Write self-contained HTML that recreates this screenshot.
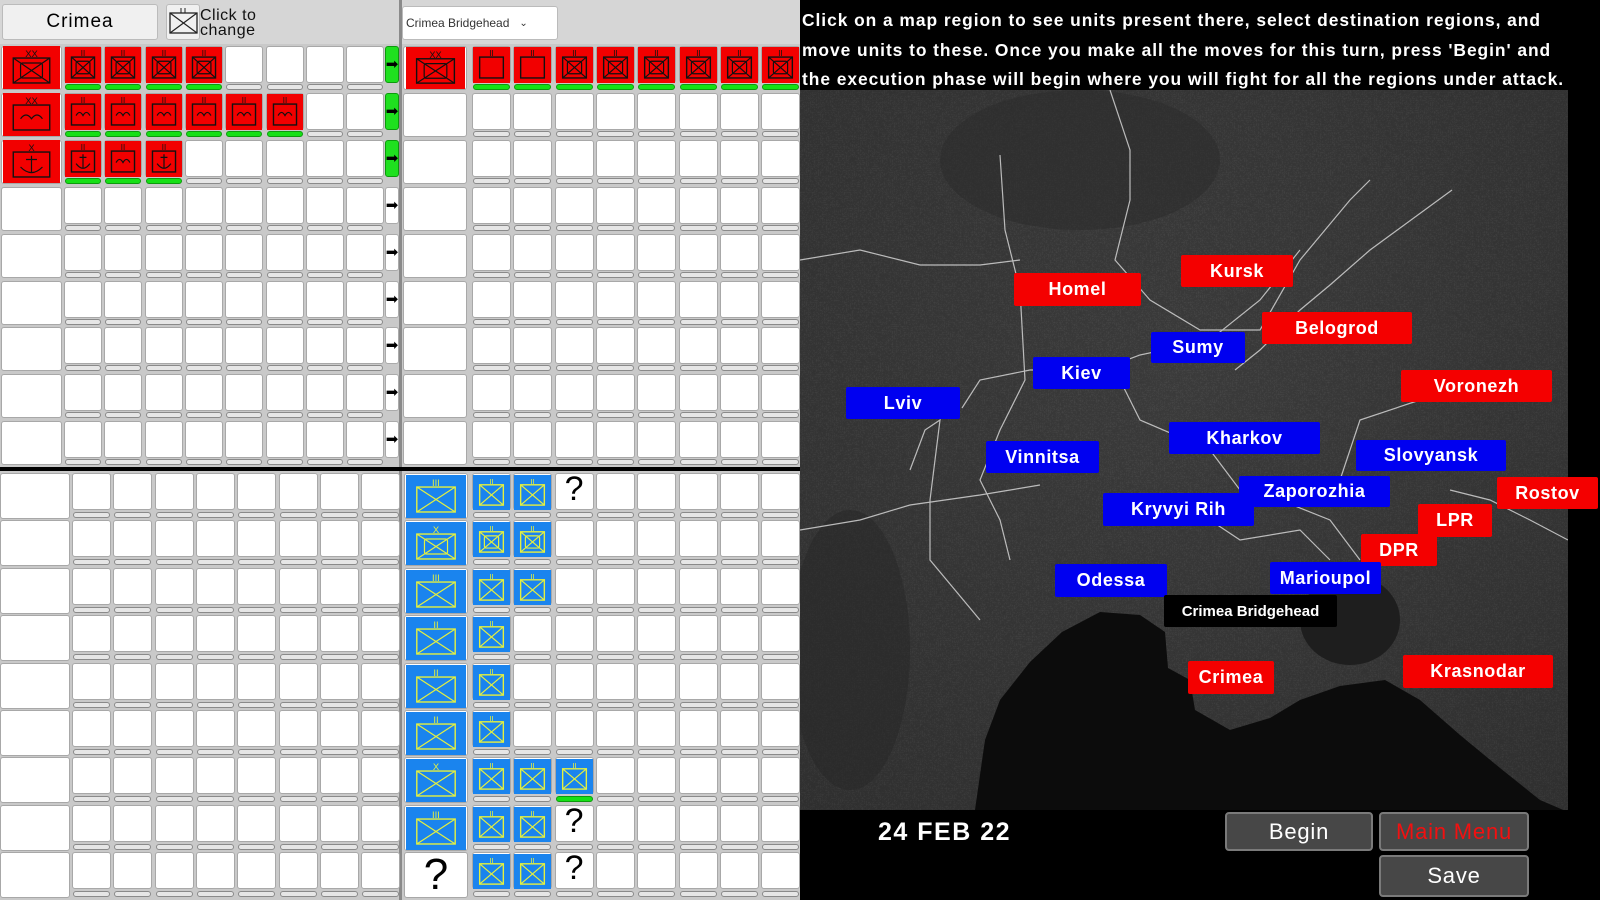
<!DOCTYPE html>
<html><head><meta charset="utf-8">
<style>
*{margin:0;padding:0;box-sizing:border-box}
body{width:1600px;height:900px;background:#000;position:relative;overflow:hidden;font-family:"Liberation Sans",sans-serif}
.a{position:absolute}
#left{left:0;top:0;width:800px;height:900px;background:#c9c9c9}
.cell{position:absolute;background:#fff;border:1px solid #a8a8a8;border-radius:3px}
.pill{position:absolute;background:#e6e6e6;border:1.5px solid #8a8a8a;border-radius:6px}
.pill.g{background:#16e016;border-color:#0c9a0c}
.arr{position:absolute;background:#fff;border:1px solid #aaa;border-radius:3px;font-size:15px;line-height:1;text-align:center;color:#000;display:flex;align-items:center;justify-content:center}
.arr.g{background:#1fe01f;border-color:#0c9a0c}
.lbl{position:absolute;color:#fff;font-weight:bold;font-size:18px;display:flex;align-items:center;justify-content:center;border-radius:2px;letter-spacing:.6px}
.r{background:#f40000}.b{background:#0000f0}
.btn{position:absolute;background:#474747;border:2px solid #7a7a7a;border-radius:4px;color:#fff;font-size:22px;display:flex;align-items:center;justify-content:center;letter-spacing:.8px}
.q{position:absolute;font-size:34px;color:#000;text-align:center;font-family:"Liberation Sans",sans-serif}
</style></head><body>
<div id="left" class="a"></div>
<div class="a" style="left:0;top:0;width:400px;height:44px;background:#d6d6d6"></div>
<div class="a" style="left:2px;top:4px;width:156px;height:36px;background:#f0f0f0;border:1px solid #bbb;border-radius:3px;font-size:19px;display:flex;align-items:center;justify-content:center;letter-spacing:1px">Crimea</div>
<div class="a" style="left:166px;top:4px;width:34px;height:36px;background:#f0f0f0;border:1px solid #bbb;border-radius:3px"></div>
<svg class="a" style="left:168px;top:6px" width="32" height="32"><line x1="13" y1="2" x2="13" y2="7" stroke="#222"/><line x1="17" y1="2" x2="17" y2="7" stroke="#222"/><rect x="2" y="7" width="27" height="20" fill="none" stroke="#222" stroke-width="1.3"/><path d="M2 7L29 27M29 7L2 27" stroke="#222" stroke-width="1.2"/></svg>
<div class="a" style="left:200px;top:8px;font-size:16px;line-height:15px;color:#111;letter-spacing:.5px">Click to<br>change</div>
<div class="a" style="left:400px;top:0;width:400px;height:44px;background:#d6d6d6"></div>
<div class="a" style="left:402px;top:6px;width:156px;height:34px;background:#fff;border:1px solid #bbb;border-radius:3px;font-size:12px;display:flex;align-items:center;padding-left:3px;color:#333">Crimea Bridgehead&nbsp;&nbsp;&nbsp;<span style="font-size:10px">⌄</span></div>
<div class="a" style="left:399px;top:0;width:3px;height:900px;background:#8a8a8a"></div>
<div class="a" style="left:0;top:467px;width:800px;height:4px;background:#000"></div>
<div id="g"></div>

<div class="a" style="left:802px;top:6px;width:780px;color:#fff;font-size:17.4px;font-weight:bold;line-height:29.5px;letter-spacing:.95px;white-space:nowrap">Click on a map region to see units present there, select destination regions, and<br>move units to these. Once you make all the moves for this turn, press 'Begin' and<br>the execution phase will begin where you will fight for all the regions under attack.</div>

<svg class="a" style="left:800px;top:90px" width="768" height="720" viewBox="800 90 768 720">
<defs><radialGradient id="lg" cx="0.5" cy="0.4" r="0.8"><stop offset="0" stop-color="#464646"/><stop offset="1" stop-color="#383838"/></radialGradient>
<filter id="n"><feTurbulence baseFrequency="0.5" numOctaves="2" seed="3"/><feColorMatrix values="0 0 0 0 0 0 0 0 0 0 0 0 0 0 0 0 0 0 -1 0.6"/></filter></defs>
<rect x="800" y="90" width="768" height="720" fill="url(#lg)"/>
<rect x="800" y="90" width="768" height="720" filter="url(#n)" opacity=".35"/>
<ellipse cx="1080" cy="160" rx="140" ry="70" fill="#2a2a2a" opacity=".5"/>
<ellipse cx="850" cy="650" rx="60" ry="140" fill="#262626" opacity=".5"/>
<ellipse cx="1350" cy="620" rx="50" ry="45" fill="#1e1e1e"/>
<path d="M975 810L985 740L1000 700L1030 662L1062 632L1100 612L1140 615L1165 632L1168 668L1190 680L1195 710L1230 730L1270 718L1300 700L1340 686L1385 680L1420 700L1460 735L1500 768L1540 800L1568 812Z" fill="#0c0c0c"/>
<g fill="none" stroke="#ddd" stroke-width="1.2" opacity=".8">
<path d="M1000 155L1005 230L1020 290L1025 380L1000 430L980 480L1000 520L1010 560"/>
<path d="M800 260L860 250L920 265L980 265L1020 260"/>
<path d="M962 408L980 380L1030 370L1100 370L1140 355L1210 340L1260 300L1300 250"/>
<path d="M1235 370L1260 350L1300 310L1330 285L1370 250L1452 190"/>
<path d="M910 470L925 430L940 420L930 500L930 560L980 620"/>
<path d="M800 530L860 520L910 505L980 495L1040 485"/>
<path d="M1110 90L1130 150L1130 200L1115 260L1150 300L1200 330L1260 330L1300 260L1350 200L1370 180"/>
<path d="M1120 380L1140 420L1210 450L1240 490L1280 500L1330 520L1360 560"/>
<path d="M1340 480L1360 420L1420 400L1470 380L1540 395"/>
<path d="M1450 490L1490 500L1530 520L1568 540"/>
<path d="M1210 520L1240 540L1300 530L1330 560"/>
</g>
</svg>
<div id="labels"></div>

<div class="a" style="left:878px;top:818px;color:#fff;font-size:25px;font-weight:bold;letter-spacing:1.5px">24 FEB 22</div>
<div class="btn" style="left:1225px;top:812px;width:148px;height:39px">Begin</div>
<div class="btn" style="left:1379px;top:812px;width:150px;height:39px;color:#f21010">Main Menu</div>
<div class="btn" style="left:1379px;top:855px;width:150px;height:42px">Save</div>

<script>
function unit(w,h,color,line,kind,mark){
 var fw=w*0.64,fh=h*0.58,fx=(w-fw)/2,fy=h*0.28;
 var s='<svg width="'+w+'" height="'+h+'" style="display:block"><rect width="'+w+'" height="'+h+'" fill="'+color+'"/>';
 s+='<text x="'+w/2+'" y="'+(fy-1)+'" font-size="'+(h*0.22)+'" text-anchor="middle" fill="'+line+'" font-family="Liberation Sans">'+mark+'</text>';
 s+='<rect x="'+fx+'" y="'+fy+'" width="'+fw+'" height="'+fh+'" fill="none" stroke="'+line+'" stroke-width="1.4"/>';
 if(kind=='x'||kind=='xx'){s+='<path d="M'+fx+' '+fy+'L'+(fx+fw)+' '+(fy+fh)+'M'+(fx+fw)+' '+fy+'L'+fx+' '+(fy+fh)+'" stroke="'+line+'" stroke-width="1.2"/>';}
 if(kind=='xx'){s+='<rect x="'+(fx+fw*0.2)+'" y="'+(fy+fh*0.2)+'" width="'+fw*0.6+'" height="'+fh*0.6+'" fill="none" stroke="'+line+'" stroke-width="1.2" rx="2"/>';}
 if(kind=='w'){var cy=fy+fh*0.55;s+='<path d="M'+(fx+fw*0.2)+' '+cy+'Q'+(fx+fw*0.35)+' '+(cy-fh*0.3)+' '+(fx+fw*0.5)+' '+cy+'Q'+(fx+fw*0.65)+' '+(cy-fh*0.3)+' '+(fx+fw*0.8)+' '+cy+'" fill="none" stroke="'+line+'" stroke-width="1.2"/>';}
 if(kind=='a'){var cx=w/2;s+='<path d="M'+cx+' '+(fy+fh*0.15)+'V'+(fy+fh*0.85)+'M'+(cx-fw*0.15)+' '+(fy+fh*0.3)+'H'+(cx+fw*0.15)+'M'+(cx-fw*0.3)+' '+(fy+fh*0.6)+'Q'+cx+' '+(fy+fh*1.05)+' '+(cx+fw*0.3)+' '+(fy+fh*0.6)+'" fill="none" stroke="'+line+'" stroke-width="1.2"/>';}
 return s+'</svg>';
}
var H='';
function box(x,y,w,h,cls,inner){H+='<div class="'+cls+'" style="left:'+x+'px;top:'+y+'px;width:'+w+'px;height:'+h+'px">'+(inner||'')+'</div>';}
function abs(x,y,inner){H+='<div class="a" style="left:'+x+'px;top:'+y+'px">'+inner+'</div>';}
var R='#f20000',K='#111',B='#1a84ee',Y='#e4f040';
var tl=[[['xx','xx'],4,'xx'],[['w','xx'],6,'w'],[['a','x'],3,'a']];
for(var r=0;r<9;r++){
 var T=45+r*46.9;
 box(1,T+1,61,44,'cell');
 for(var i=0;i<8;i++){var x=64+i*40.3;box(x,T+1,38,37,'cell');box(x+1,T+39,36,6,'pill'+(r<3&&i<tl[r][1]?' g':''));}
 box(385,T+1,14,37,'arr'+(r<3?' g':''),'➡');
 if(r<3){abs(3,T+1,unit(57,43,R,K,tl[r][0][0],r==2?'X':'XX'));
  for(var i=0;i<tl[r][1];i++){var k=tl[r][2];if(r==2&&i==1)k='w';abs(65+i*40.3,T+2,unit(36,36,R,K,k,'II'));}}
}
for(var r=0;r<9;r++){
 var T=45+r*46.9;
 box(403,T+1,64,44,'cell');
 for(var i=0;i<8;i++){var x=472+i*41.3;box(x,T+1,39,37,'cell');box(x+1,T+39,37,6,'pill'+(r==0?' g':''));}
 if(r==0){abs(406,T+2,unit(59,42,R,K,'xx','XX'));for(var i=0;i<8;i++)abs(473+i*41.3,T+2,unit(37,36,R,K,i<2?'o':'xx','II'));}
}
for(var r=0;r<9;r++){
 var T=473+r*47.4;
 box(0,T,70,46,'cell');
 for(var i=0;i<8;i++){var x=72+i*41.3;box(x,T,39,37,'cell');box(x+1,T+39,37,6,'pill');}
}
var br=[[2,1,'III'],[2,0,'X'],[2,0,'III'],[1,0,'II'],[1,0,'II'],[1,0,'II'],[3,0,'X'],[2,1,'III'],[2,1,'?']];
for(var r=0;r<9;r++){
 var T=473+r*47.4;
 box(404,T,64,46,'cell');
 for(var i=0;i<8;i++){var x=472+i*41.3;box(x,T,39,37,'cell');box(x+1,T+39,37,6,'pill'+(r==6&&i==2?' g':''));}
 if(br[r][2]=='?')H+='<div class="q" style="left:404px;top:'+(T-2)+'px;width:64px;font-size:44px">?</div>';
 else abs(406,T+2,unit(60,43,B,Y,r==1?'xx':'x',br[r][2]));
 for(var i=0;i<br[r][0];i++)abs(473+i*41.3,T+2,unit(37,35,B,Y,r==1?'xx':'x','II'));
 if(br[r][1])H+='<div class="q" style="left:'+(472+br[r][0]*41.3)+'px;top:'+(T-3)+'px;width:39px">?</div>';
}
document.getElementById('g').innerHTML=H;
var L=[['Homel',1014,273,127,33,'r'],['Kursk',1181,255,112,32,'r'],['Belogrod',1262,312,150,32,'r'],['Sumy',1151,332,94,31,'b'],['Kiev',1033,357,97,32,'b'],['Lviv',846,387,114,32,'b'],['Voronezh',1401,370,151,32,'r'],['Kharkov',1169,422,151,32,'b'],['Vinnitsa',986,441,113,32,'b'],['Slovyansk',1356,440,150,31,'b'],['Rostov',1497,477,101,32,'r'],['Zaporozhia',1239,476,151,31,'b'],['Kryvyi Rih',1103,493,151,33,'b'],['LPR',1418,504,74,33,'r'],['DPR',1361,534,76,32,'r'],['Odessa',1055,564,112,33,'b'],['Marioupol',1270,562,111,32,'b'],['Crimea Bridgehead',1164,595,173,32,''],['Crimea',1188,661,86,33,'r'],['Krasnodar',1403,655,150,33,'r']];
var s='';L.forEach(function(l){s+='<div class="lbl '+l[5]+'" style="left:'+l[1]+'px;top:'+l[2]+'px;width:'+l[3]+'px;height:'+l[4]+'px;'+(l[5]?'':'background:#000;font-size:15px;letter-spacing:0')+'">'+l[0]+'</div>';});
document.getElementById('labels').innerHTML=s;
</script>
</body></html>
